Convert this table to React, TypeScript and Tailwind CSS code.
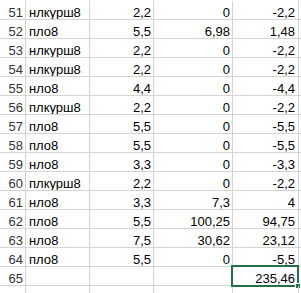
import React from "react";

const rows: [number, string, string, string, string][] = [
  [51, "нлкурш8", "2,2", "0", "-2,2"],
  [52, "пло8", "5,5", "6,98", "1,48"],
  [53, "нлкурш8", "2,2", "0", "-2,2"],
  [54, "нлкурш8", "2,2", "0", "-2,2"],
  [55, "нло8", "4,4", "0", "-4,4"],
  [56, "плкурш8", "2,2", "0", "-2,2"],
  [57, "пло8", "5,5", "0", "-5,5"],
  [58, "пло8", "5,5", "0", "-5,5"],
  [59, "нло8", "3,3", "0", "-3,3"],
  [60, "плкурш8", "2,2", "0", "-2,2"],
  [61, "нло8", "3,3", "7,3", "4"],
  [62, "пло8", "5,5", "100,25", "94,75"],
  [63, "нло8", "7,5", "30,62", "23,12"],
  [64, "пло8", "5,5", "0", "-5,5"],
  [65, "", "", "", "235,46"],
  [66, "", "", "", ""],
];

const cell = "h-[19px] border-r border-b border-[#d4d4d4] flex items-end leading-[13px] overflow-hidden whitespace-nowrap";

export default function App() {
  return (
    <div
      className="w-[301px] h-[293px] overflow-hidden bg-white pt-px text-[13px] text-black"
      style={{ fontFamily: '"Liberation Sans", Arial, sans-serif' }}
    >
      <div className="grid grid-cols-[26px_64px_64px_79px_66px_1fr]">
        {rows.map(([n, a, b, c, d]) => (
          <React.Fragment key={n}>
            <div className={`${cell} justify-end pr-[2px] text-[#333]`}>{n}</div>
            <div className={`${cell} pl-[3px]`}>{a}</div>
            <div className={`${cell} justify-end pr-[2px]`}>{b}</div>
            <div className={`${cell} justify-end pr-[2px]`}>{c}</div>
            <div className={`${cell} justify-end pr-[3px] relative overflow-visible`}>
              {d}
              {n === 65 && (
                <div className="absolute -top-[2px] -left-[2px] -right-[1px] -bottom-[2px] border-2 border-[#217346]">
                  <div className="absolute -right-[4px] -bottom-[4px] w-[6px] h-[6px] bg-[#217346] border border-white" />
                </div>
              )}
            </div>
            <div className="h-[19px] border-b border-[#d4d4d4]" />
          </React.Fragment>
        ))}
      </div>
    </div>
  );
}
